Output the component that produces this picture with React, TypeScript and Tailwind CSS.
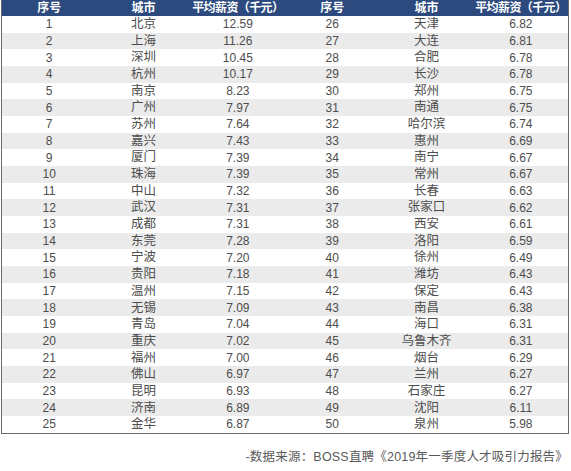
const rows: [number, string, string][] = [
  [1, "北京", "12.59"],
  [2, "上海", "11.26"],
  [3, "深圳", "10.45"],
  [4, "杭州", "10.17"],
  [5, "南京", "8.23"],
  [6, "广州", "7.97"],
  [7, "苏州", "7.64"],
  [8, "嘉兴", "7.43"],
  [9, "厦门", "7.39"],
  [10, "珠海", "7.39"],
  [11, "中山", "7.32"],
  [12, "武汉", "7.31"],
  [13, "成都", "7.31"],
  [14, "东莞", "7.28"],
  [15, "宁波", "7.20"],
  [16, "贵阳", "7.18"],
  [17, "温州", "7.15"],
  [18, "无锡", "7.09"],
  [19, "青岛", "7.04"],
  [20, "重庆", "7.02"],
  [21, "福州", "7.00"],
  [22, "佛山", "6.97"],
  [23, "昆明", "6.93"],
  [24, "济南", "6.89"],
  [25, "金华", "6.87"],
  [26, "天津", "6.82"],
  [27, "大连", "6.81"],
  [28, "合肥", "6.78"],
  [29, "长沙", "6.78"],
  [30, "郑州", "6.75"],
  [31, "南通", "6.75"],
  [32, "哈尔滨", "6.74"],
  [33, "惠州", "6.69"],
  [34, "南宁", "6.67"],
  [35, "常州", "6.67"],
  [36, "长春", "6.63"],
  [37, "张家口", "6.62"],
  [38, "西安", "6.61"],
  [39, "洛阳", "6.59"],
  [40, "徐州", "6.49"],
  [41, "潍坊", "6.43"],
  [42, "保定", "6.43"],
  [43, "南昌", "6.38"],
  [44, "海口", "6.31"],
  [45, "乌鲁木齐", "6.31"],
  [46, "烟台", "6.29"],
  [47, "兰州", "6.27"],
  [48, "石家庄", "6.27"],
  [49, "沈阳", "6.11"],
  [50, "泉州", "5.98"],
];

const cjk = "font-['Liberation_Sans','Noto_Sans_CJK_SC',sans-serif]";

const App = () => {
  const left = rows.slice(0, 25);
  const right = rows.slice(25);
  return (
    <div className={`w-[571px] h-[471px] bg-white ${cjk}`}>
      <div className="ml-[1px] w-[568px] border-l border-r border-b border-[#6b6b6b]">
        <div className="grid grid-cols-6 h-[16px] bg-[#2c4a7d] text-white text-[12px] font-bold leading-[16px] text-center whitespace-nowrap">
          <div>序号</div>
          <div>城市</div>
          <div className="tracking-[-0.6px]">平均薪资（千元）</div>
          <div>序号</div>
          <div>城市</div>
          <div className="tracking-[-0.6px]">平均薪资（千元）</div>
        </div>
        {left.map((r, i) => {
          const s = right[i];
          return (
            <div
              key={r[0]}
              className={`grid grid-cols-6 h-[16.68px] items-center text-center text-[12px] leading-none text-[#4d4d4d] ${
                i % 2 === 1 ? "bg-[#ebebeb]" : "bg-white"
              }`}
            >
              <div>{r[0]}</div>
              <div className="text-[12.5px]">{r[1]}</div>
              <div>{r[2]}</div>
              <div>{s[0]}</div>
              <div className="text-[12.5px]">{s[1]}</div>
              <div>{s[2]}</div>
            </div>
          );
        })}
      </div>
      <div className="mt-[14px] pr-[3px] text-right text-[12.5px] text-[#5a5a5a] tracking-[0.2px]">
        -数据来源：BOSS直聘《2019年一季度人才吸引力报告》
      </div>
    </div>
  );
};

export default App;
